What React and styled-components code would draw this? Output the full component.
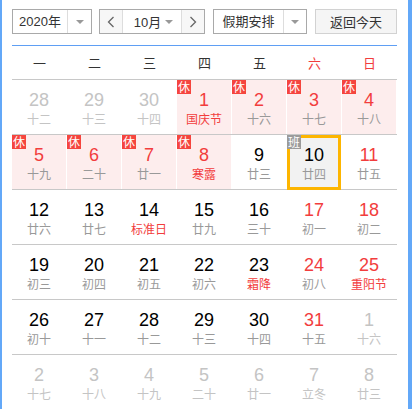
import React from "react";
import styled, { createGlobalStyle } from "styled-components";

const GlobalStyle = createGlobalStyle`
  html, body {
    margin: 0;
    padding: 0;
    background: #ffffff;
  }
  body {
    font-family: "Liberation Sans", Arial, "Noto Sans CJK SC", sans-serif;
  }
`;

const weekdays = [
  { label: "一" },
  { label: "二" },
  { label: "三" },
  { label: "四" },
  { label: "五" },
  { label: "六", weekend: true },
  { label: "日", weekend: true },
];

// kind: other | normal ; red: number in red ; festival: lunar in red
const weeks = [
  [
    { d: 28, l: "十二", other: true },
    { d: 29, l: "十三", other: true },
    { d: 30, l: "十四", other: true },
    { d: 1, l: "国庆节", holiday: true, red: true, festival: true },
    { d: 2, l: "十六", holiday: true, red: true },
    { d: 3, l: "十七", holiday: true, red: true },
    { d: 4, l: "十八", holiday: true, red: true },
  ],
  [
    { d: 5, l: "十九", holiday: true, red: true },
    { d: 6, l: "二十", holiday: true, red: true },
    { d: 7, l: "廿一", holiday: true, red: true },
    { d: 8, l: "寒露", holiday: true, red: true, festival: true },
    { d: 9, l: "廿三" },
    { d: 10, l: "廿四", work: true, today: true },
    { d: 11, l: "廿五", red: true },
  ],
  [
    { d: 12, l: "廿六" },
    { d: 13, l: "廿七" },
    { d: 14, l: "标准日", festival: true },
    { d: 15, l: "廿九" },
    { d: 16, l: "三十" },
    { d: 17, l: "初一", red: true },
    { d: 18, l: "初二", red: true },
  ],
  [
    { d: 19, l: "初三" },
    { d: 20, l: "初四" },
    { d: 21, l: "初五" },
    { d: 22, l: "初六" },
    { d: 23, l: "霜降", festival: true },
    { d: 24, l: "初八", red: true },
    { d: 25, l: "重阳节", red: true, festival: true },
  ],
  [
    { d: 26, l: "初十" },
    { d: 27, l: "十一" },
    { d: 28, l: "十二" },
    { d: 29, l: "十三" },
    { d: 30, l: "十四" },
    { d: 31, l: "十五", red: true },
    { d: 1, l: "十六", other: true },
  ],
  [
    { d: 2, l: "十七", other: true },
    { d: 3, l: "十八", other: true },
    { d: 4, l: "十九", other: true },
    { d: 5, l: "二十", other: true },
    { d: 6, l: "廿一", other: true },
    { d: 7, l: "立冬", other: true },
    { d: 8, l: "廿三", other: true },
  ],
];

const App = () => {
  return (
    <>
      <GlobalStyle />
      <Frame>
        <Toolbar>
          <Select $width={80} $labelWidth={55}>
            <SelectLabel>2020年</SelectLabel>
            <ArrowBox>
              <Caret />
            </ArrowBox>
          </Select>

          <MonthGroup>
            <NavButton>
              <svg width="8" height="12" viewBox="0 0 8 12">
                <polyline
                  points="6.5,1 1.5,6 6.5,11"
                  fill="none"
                  stroke="#666"
                  strokeWidth="1.3"
                />
              </svg>
            </NavButton>
            <MonthLabel>
              <span>10月</span>
              <Caret />
            </MonthLabel>
            <NavButton>
              <svg width="8" height="12" viewBox="0 0 8 12">
                <polyline
                  points="1.5,1 6.5,6 1.5,11"
                  fill="none"
                  stroke="#666"
                  strokeWidth="1.3"
                />
              </svg>
            </NavButton>
          </MonthGroup>

          <Select $width={94} $labelWidth={70}>
            <SelectLabel>假期安排</SelectLabel>
            <ArrowBox>
              <Caret />
            </ArrowBox>
          </Select>

          <TodayButton>返回今天</TodayButton>
        </Toolbar>

        <WeekHeader>
          {weekdays.map((w) => (
            <WeekdayCell key={w.label} $weekend={w.weekend}>
              {w.label}
            </WeekdayCell>
          ))}
        </WeekHeader>

        {weeks.map((week, i) => (
          <WeekRow key={i}>
            {week.map((day, j) => (
              <DayCell key={j} $holiday={day.holiday} $today={day.today}>
                {day.holiday && <Badge>休</Badge>}
                {day.work && <Badge $work>班</Badge>}
                <DayNumber $red={day.red} $other={day.other}>
                  {day.d}
                </DayNumber>
                <Lunar $festival={day.festival} $other={day.other}>
                  {day.l}
                </Lunar>
              </DayCell>
            ))}
          </WeekRow>
        ))}
      </Frame>
    </>
  );
};

const Frame = styled.div`
  box-sizing: border-box;
  width: 412px;
  height: 409px;
  overflow: hidden;
  border-left: 2px solid #63a8f8;
  border-right: 4px solid #63a8f8;
  padding: 9px 11px 0 10px;
  background: #ffffff;
`;

const Toolbar = styled.div`
  display: flex;
  align-items: center;
  gap: 7px;
  height: 25px;
  margin-bottom: 11px;
  color: #333333;
  font-size: 13px;
  font-family: "Liberation Sans", Arial, "Noto Sans CJK SC", sans-serif;
`;

const Select = styled.div`
  box-sizing: border-box;
  display: flex;
  width: ${(p) => p.$width}px;
  height: 25px;
  border: 1px solid #a9a9a9;
  background: #ffffff;

  & > :first-child {
    width: ${(p) => p.$labelWidth - 1}px;
  }
`;

const SelectLabel = styled.div`
  display: flex;
  align-items: center;
  justify-content: center;
  border-right: 1px solid #dddddd;
  line-height: 23px;
`;

const ArrowBox = styled.div`
  flex: 1;
  display: flex;
  align-items: center;
  justify-content: center;
`;

const Caret = styled.span`
  display: inline-block;
  width: 0;
  height: 0;
  border-left: 4px solid transparent;
  border-right: 4px solid transparent;
  border-top: 4px solid #999999;
`;

const MonthGroup = styled.div`
  box-sizing: border-box;
  display: flex;
  width: 106px;
  height: 25px;
  margin-right: 1px;
  border: 1px solid #a9a9a9;
`;

const NavButton = styled.div`
  display: flex;
  align-items: center;
  justify-content: center;
  width: 22px;
  background: #f7f7f7;
`;

const MonthLabel = styled.div`
  display: flex;
  align-items: center;
  justify-content: space-between;
  width: 61px;
  padding: 0 8px 0 11px;
  box-sizing: border-box;
  border-left: 1px solid #dddddd;
  border-right: 1px solid #dddddd;
  background: #ffffff;
`;

const TodayButton = styled.div`
  box-sizing: border-box;
  display: flex;
  align-items: center;
  justify-content: center;
  width: 82px;
  height: 25px;
  margin-left: 1px;
  border: 1px solid #d2d2d2;
  background: #f5f5f5;
`;

const WeekHeader = styled.div`
  display: grid;
  grid-template-columns: repeat(7, 55px);
  height: 33px;
  border-top: 1px solid #5f9ff4;
  border-bottom: 1px solid #c8c8c8;
`;

const WeekdayCell = styled.div`
  text-align: center;
  line-height: 33px;
  font-size: 13px;
  color: ${(p) => (p.$weekend ? "#f23d3d" : "#333333")};
  font-family: "Noto Sans CJK SC", sans-serif;
`;

const WeekRow = styled.div`
  display: grid;
  grid-template-columns: repeat(7, 55px);
  height: 54px;
  border-bottom: 1px solid #c8c8c8;
`;

const DayCell = styled.div`
  position: relative;
  margin-right: 1px;
  padding-top: 10px;
  box-sizing: border-box;
  text-align: center;
  background: ${(p) =>
    p.$holiday ? "#fdeded" : p.$today ? "#f2f2f2" : "transparent"};

  ${(p) =>
    p.$today &&
    `
    &::after {
      content: "";
      position: absolute;
      left: 0;
      top: 0;
      right: 0;
      bottom: -1px;
      border: 3px solid #fdb500;
    }
  `}
`;

const Badge = styled.span`
  position: absolute;
  left: 0;
  top: 0;
  z-index: 1;
  width: 14px;
  height: 14px;
  line-height: 14px;
  font-size: 12px;
  text-align: center;
  color: #ffffff;
  background: ${(p) => (p.$work ? "#9b9b9b" : "#f5453e")};
  font-family: "Noto Sans CJK SC", sans-serif;
`;

const DayNumber = styled.div`
  height: 20px;
  line-height: 20px;
  font-size: 18px;
  font-family: "Liberation Sans", Arial, sans-serif;
  color: ${(p) => (p.$other ? "#c4c4c4" : p.$red ? "#f23d3d" : "#000000")};
`;

const Lunar = styled.div`
  margin-top: 2px;
  height: 14px;
  line-height: 14px;
  font-size: 12px;
  font-family: "Noto Sans CJK SC", sans-serif;
  color: ${(p) => (p.$other ? "#c4c4c4" : p.$festival ? "#f23d3d" : "#999999")};
`;

export default App;
